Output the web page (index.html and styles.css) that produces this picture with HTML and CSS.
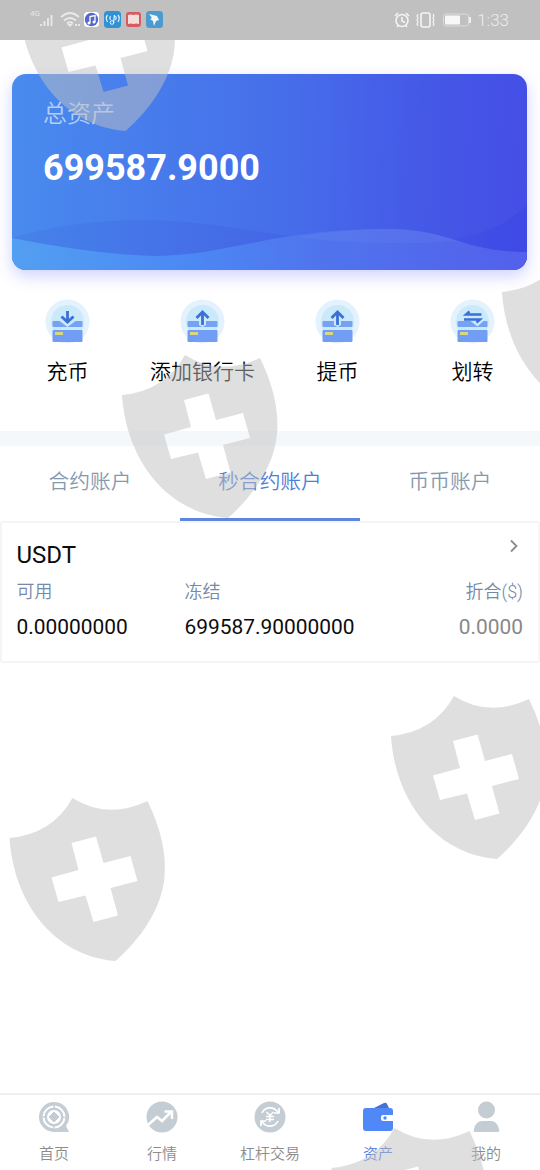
FILE: index.html
```
<!DOCTYPE html>
<html lang="zh-CN">
<head>
<meta charset="utf-8">
<title>资产</title>
<link rel="stylesheet" href="styles.css">
</head>
<body>
<div class="app">
  <header class="status">
    <svg class="status-left" width="150" height="24" viewBox="0 0 150 24">
      <text class="net" x="15" y="8">4G</text>
      <g fill="#e6e6e6"><rect x="25" y="16" width="2" height="2"/><rect x="28.500" y="13" width="2" height="5"/><rect x="32" y="10" width="2" height="8"/><rect x="35.500" y="7" width="2" height="11"/></g>
      <g fill="none" stroke="#e9e9e9" stroke-width="1.800"><path d="M46 9Q55 1 64 9M49 12.500Q55 7.500 61 12.500M52 15.500Q55 13 58 15.500"/></g>
      <path d="M55 19l-3-3h6zM60 16h2v2h-2zM63 16h2v2h-2z" fill="#e9e9e9"/>
      <rect x="69" y="4" width="15" height="15" rx="3.500" fill="#fff"/><circle cx="76.500" cy="11.500" r="6.700" fill="#5367cc"/>
      <path d="M75 15V8.500l5-1V14" fill="none" stroke="#fff" stroke-width="1.300"/><circle cx="74" cy="15" r="1.500" fill="#fff"/><circle cx="79" cy="14" r="1.500" fill="#fff"/>
      <rect x="89" y="3" width="17" height="17" rx="3.500" fill="#2f92d6"/>
      <path d="M92.500 7q-2.500 3 0 7M95.500 8q-1.500 2 0 4M103 7q2.500 3 0 7M100.500 8q1.500 2 0 4M99.500 7l-1 8" fill="none" stroke="#e8f5ff" stroke-width="1.200"/><circle cx="97" cy="14.500" r="1.800" fill="none" stroke="#e8f5ff"/>
      <rect x="111" y="4" width="15" height="15" rx="3" fill="#d65b61"/><path d="M113 7q3-1 5.500 0 2.500-1 5.500 0v9q-3-1-5.500 0-2.500-1-5.500 0z" fill="#f3dede"/>
      <rect x="131" y="3" width="17" height="17" rx="3.500" fill="#4b9bd0"/><path d="M134 6l8 2 2 4-3 1-2 5-1-5-3-2 2-1z" fill="#f0f7fb"/>
    </svg>
    <div class="status-right">
      <svg width="78" height="20" viewBox="0 0 78 20">
        <g fill="none" stroke="#f4f4f4" stroke-width="1.600"><circle cx="9" cy="10.500" r="6"/><path d="M9 7v4l3 1.500M2 6l3-3M16 6l-3-3M4 17l1.500-2M14 17l-1.500-2"/><rect x="28" y="3" width="9" height="14" rx="2"/><path d="M25 4l-1 2 1 2-1 2 1 2-1 2 1 2M40 4l1 2-1 2 1 2-1 2 1 2-1 2" stroke-width="1.200"/></g>
        <rect x="50.500" y="4" width="25" height="12" rx="2.500" fill="none" stroke="#dcdcdc"/><rect x="52" y="5.500" width="15" height="9" rx="1" fill="#f7f7f7"/><path d="M77 7v6" stroke="#eee" stroke-width="2"/>
      </svg>
      <span>1:33</span>
    </div>
  </header>

  <section class="card">
    <svg class="waves" width="515" height="75" viewBox="0 0 515 75" preserveAspectRatio="none">
      <defs>
        <linearGradient id="front"><stop offset="0" stop-color="#539ff2"/><stop offset=".32" stop-color="#4b8af4"/><stop offset=".6" stop-color="#5074ed"/><stop offset="1" stop-color="#5360eb"/></linearGradient>
        <linearGradient id="back"><stop offset="0" stop-color="#4583ea"/><stop offset=".5" stop-color="#4567e7"/><stop offset="1" stop-color="#3f49e5"/></linearGradient>
      </defs>
      <path d="M0 43Q60 25 130 25C210 25 270 45 350 48C440 50 480 43 515 10V75H0Z" fill="url(#back)"/>
      <path d="M0 43Q80 59 143 61C220 60 260 34 375 34C440 34 450 57 515 57V75H0Z" fill="url(#front)"/>
      <path d="M287 42Q330 34 375 34C410 34 430 41 446 46Q360 52 287 42Z" fill="#fff" opacity=".04"/>
    </svg>
    <div class="card-label">总资产</div>
    <div class="card-total">699587.9000</div>
  </section>

  <nav class="actions">
    <a class="action">
      <svg width="46" height="46" viewBox="0 0 46 46"><circle cx="22.500" cy="22.500" r="22" fill="#e3f2fc"/><circle cx="22.500" cy="22.500" r="16.500" fill="#cae9fb"/><rect x="7.500" y="22" width="30" height="6" rx="1" fill="#76a2f3"/><path d="M14.500 22h16l-8 6z" fill="#cae9fb"/><rect x="7.500" y="31" width="30" height="12" rx="1" fill="#729df4"/><rect x="10" y="33" width="8" height="3" fill="#d9d780"/><path d="M22.500 12v11M16.500 17.500l6 5.500 6-5.500" fill="none" stroke="#3b71d6" stroke-width="2.800"/></svg>
      <span>充币</span>
    </a>
    <a class="action">
      <svg width="46" height="46" viewBox="0 0 46 46"><circle cx="22.500" cy="22.500" r="22" fill="#e3f2fc"/><circle cx="22.500" cy="22.500" r="16.500" fill="#cae9fb"/><rect x="7.500" y="22" width="30" height="6" rx="1" fill="#76a2f3"/><path d="M19 22h7v4l-3.500 2-3.500-2z" fill="#cae9fb"/><rect x="7.500" y="31" width="30" height="12" rx="1" fill="#729df4"/><rect x="10" y="33" width="8" height="3" fill="#d9d780"/><path d="M22.500 26V14M16.500 19l6-6 6 6" fill="none" stroke="#3b71d6" stroke-width="2.800"/></svg>
      <span>添加银行卡</span>
    </a>
    <a class="action">
      <svg width="46" height="46" viewBox="0 0 46 46"><circle cx="22.500" cy="22.500" r="22" fill="#e3f2fc"/><circle cx="22.500" cy="22.500" r="16.500" fill="#cae9fb"/><rect x="7.500" y="22" width="30" height="6" rx="1" fill="#76a2f3"/><path d="M19 22h7v4l-3.500 2-3.500-2z" fill="#cae9fb"/><rect x="7.500" y="31" width="30" height="12" rx="1" fill="#729df4"/><rect x="10" y="33" width="8" height="3" fill="#d9d780"/><path d="M22.500 26V14M16.500 19l6-6 6 6" fill="none" stroke="#3b71d6" stroke-width="2.800"/></svg>
      <span>提币</span>
    </a>
    <a class="action">
      <svg width="46" height="46" viewBox="0 0 46 46"><circle cx="22.500" cy="22.500" r="22" fill="#e3f2fc"/><circle cx="22.500" cy="22.500" r="16.500" fill="#cae9fb"/><rect x="7.500" y="22" width="30" height="6" rx="1" fill="#76a2f3"/><path d="M20.500 22h13l-6 5.500z" fill="#cae9fb"/><rect x="7.500" y="31" width="30" height="12" rx="1" fill="#729df4"/><rect x="10" y="33" width="8" height="3" fill="#d9d780"/><path d="M31.500 15.500H16L19.500 12.500M14 20.500h16L26.500 23.500" fill="none" stroke="#3b71d6" stroke-width="2.400"/></svg>
      <span>划转</span>
    </a>
  </nav>

  <nav class="tabs">
    <a class="tab">合约账户</a>
    <a class="tab tab-active">秒合约账户</a>
    <a class="tab">币币账户</a>
  </nav>

  <section class="account">
    <div class="account-head">
      <span>USDT</span>
      <svg width="12" height="16" viewBox="0 0 12 16"><path d="M3 2.500l5.500 5.500-5.500 5.500" fill="none" stroke="#888b90" stroke-width="1.800"/></svg>
    </div>
    <div class="account-grid">
      <div><div class="label">可用</div><div class="value">0.00000000</div></div>
      <div><div class="label">冻结</div><div class="value">699587.90000000</div></div>
      <div class="end"><div class="label">折合($)</div><div class="value muted">0.0000</div></div>
    </div>
  </section>

  <nav class="bottom">
    <a class="item">
      <svg width="32" height="32" viewBox="0 0 32 32"><path d="M16 1a15 15 0 1 0 0 30h15l-3-6A15 15 0 0 0 16 1z" fill="#c4cdd4"/><circle cx="16" cy="16" r="10.500" fill="none" stroke="#fff" stroke-width="2" stroke-dasharray="15 1.490" stroke-dashoffset="-.75"/><circle cx="16" cy="16" r="7" fill="#fff"/><path d="M16 11l5 5-5 5-5-5z" fill="#c4cdd4" stroke="#c4cdd4" stroke-linejoin="round"/></svg>
      <span>首页</span>
    </a>
    <a class="item">
      <svg width="32" height="32" viewBox="0 0 32 32"><circle cx="16" cy="16" r="15.500" fill="#c4cdd4"/><path d="M2 24l9-8 5 4 9-9M18.500 10.500H26V18" fill="none" stroke="#fff" stroke-width="2.500"/></svg>
      <span>行情</span>
    </a>
    <a class="item">
      <svg width="32" height="32" viewBox="0 0 32 32"><circle cx="16" cy="16" r="15.500" fill="#c4cdd4"/><g fill="none" stroke="#fff" stroke-width="1.700"><path d="M8 12a9 9 0 0 1 15-2l2 2M25 7v5h-5M24 20a9 9 0 0 1-15 2l-2-2M7 25v-5h5"/><path d="M12.500 11l3.500 3.500 3.500-3.500M12 15.500h8M12 18.500h8M16 14v7" stroke-width="1.500"/></g></svg>
      <span>杠杆交易</span>
    </a>
    <a class="item item-active">
      <svg width="32" height="32" viewBox="0 0 32 32"><path d="M12 7l10-5q2-1 3 1l2 4z" fill="#496fd0"/><path d="M4 7h24q3 0 3 3v4H21q-2 0-2 2v2q0 2 2 2h10v7q0 3-3 3H4q-3 0-3-3V10q0-3 3-3z" fill="#5088f8"/><circle cx="23" cy="17" r="1.700" fill="#5088f8"/></svg>
      <span>资产</span>
    </a>
    <a class="item">
      <svg width="32" height="32" viewBox="0 0 32 32"><circle cx="16.500" cy="9" r="8.500" fill="#c4cdd4"/><path d="M5 31q-2 0-1-3 2-8 8-8h9q6 0 8 8 1 3-1 3z" fill="#c4cdd4"/></svg>
      <span>我的</span>
    </a>
  </nav>

  <svg class="watermark" width="540" height="1170" viewBox="0 0 540 1170">
    <defs>
      <path id="shield" fill-rule="evenodd" d="M0 40Q43 36 63 0Q98 22 138 3Q158 44 155 79C152 112 130 142 106 163C44 158 4 104 0 40ZM62 45L86.500 38.500L94 65L121 58L128 83L101 90L108.500 117.500L84 124L76 97.500L49 104L42 79.500L69 72Z"/>
    </defs>
    <use href="#shield" x="19.500" y="-32"/>
    <use href="#shield" x="122" y="355"/>
    <use href="#shield" x="502" y="252"/>
    <use href="#shield" x="391" y="696"/>
    <use href="#shield" x="9.500" y="798"/>
    <use href="#shield" x="331.500" y="1128"/>
  </svg>
</div>
</body>
</html>
```

FILE: styles.css
```
* { box-sizing: border-box; }
body {
  margin: 0;
  background: #fff;
  font-family: Roboto, "Noto Sans CJK SC", sans-serif;
  color: #0c0c0c;
}
.app {
  position: relative;
  display: flex;
  flex-direction: column;
  width: 540px;
  height: 1170px;
  overflow: hidden;
}
.status {
  position: relative;
  z-index: 2;
  display: flex;
  justify-content: space-between;
  align-items: center;
  height: 40px;
  flex: none;
  padding: 0 31px 0 15px;
  background: #c0c0c0;
}
.net { font-size: 8px; fill: #e6e6e6; }
.status-right {
  display: flex;
  align-items: center;
  gap: 6px;
  font-size: 17px;
  font-weight: 300;
  line-height: 20px;
  color: #ececec;
}
.card {
  position: relative;
  flex: none;
  height: 196px;
  margin: 34px 13px 0 12px;
  padding: 25px 31px;
  border-radius: 14px;
  background: linear-gradient(92deg, #498bee, #466cea 55%, #4558e7 80%, #444ee6);
  box-shadow: 0 6px 16px rgba(80, 95, 255, .28);
  color: #fff;
}
.waves {
  position: absolute;
  left: 0;
  bottom: 0;
  border-radius: 0 0 14px 14px;
}
.card-label {
  font-size: 24px;
  font-weight: 350;
  line-height: 30px;
  color: #b3cff5;
}
.card-total {
  margin-top: 17px;
  font-size: 36px;
  font-weight: 700;
  line-height: 44px;
}
.actions {
  display: grid;
  grid-template-columns: repeat(4, 1fr);
  flex: none;
  height: 161px;
  padding-top: 29px;
}
.action {
  display: flex;
  flex-direction: column;
  align-items: center;
  gap: 12px;
  font-size: 21px;
  font-weight: 350;
  line-height: 30px;
  white-space: nowrap;
  color: #000;
}
.tabs {
  display: grid;
  grid-template-columns: repeat(3, 1fr);
  flex: none;
  height: 90px;
  border-top: 15px solid #f4f8fb;
}
.tab {
  padding-top: 21px;
  border-bottom: 3px solid transparent;
  font-size: 20.7px;
  font-weight: 350;
  line-height: 30px;
  text-align: center;
  color: #8598ae;
}
.tab-active {
  border-color: #6086dc;
  color: #4d7dda;
}
.account {
  flex: none;
  height: 142px;
  padding: 16px 15px 0 14.5px;
  border: 2px solid #f4f5f6;
  border-radius: 3px;
}
.account-head {
  display: flex;
  justify-content: space-between;
  height: 35px;
  font-size: 24px;
  line-height: 32px;
}
.account-head svg { margin: -1px 3px 0 0; }
.account-grid {
  display: grid;
  grid-template-columns: 168px 1fr 100px;
}
.label {
  font-size: 18px;
  font-weight: 350;
  line-height: 36px;
  color: #758aa8;
}
.value {
  font-size: 20.9px;
  line-height: 35px;
}
.muted { color: #888; }
.end { text-align: right; }
.bottom {
  display: grid;
  grid-template-columns: repeat(5, 1fr);
  height: 77px;
  margin-top: auto;
  padding-top: 6px;
  border-top: 2px solid #efefef;
}
.item {
  display: flex;
  flex-direction: column;
  align-items: center;
  gap: 11px;
  font-size: 15px;
  font-weight: 350;
  line-height: 20px;
  color: #8c8c8c;
}
.item-active { color: #4f7cda; }
.watermark {
  position: absolute;
  left: 0;
  top: 0;
  fill: rgba(192, 192, 192, .5);
  pointer-events: none;
}
```
